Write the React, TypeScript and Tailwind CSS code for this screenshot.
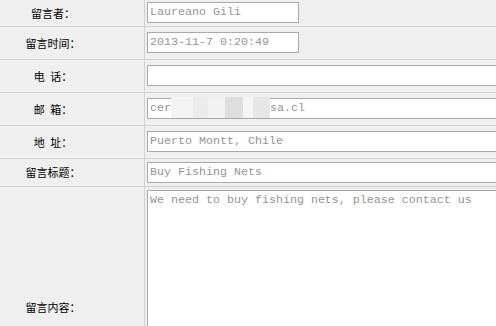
import React from 'react';

type Row = {
  label: string;
  value?: string;
  rowH: string;
  pad: string;
  boxW: string;
  blur?: boolean;
};

const ROWS: Row[] = [
  { label: '留言者：', value: 'Laureano Gili', rowH: 'h-[27px]', pad: 'pt-[2px]', boxW: 'w-[152px]' },
  { label: '留言时间：', value: '2013-11-7 0:20:49', rowH: 'h-[33px]', pad: 'pt-[5px]', boxW: 'w-[152px]' },
  { label: '电\u2002话：', value: '', rowH: 'h-[33px]', pad: 'pt-[5px]', boxW: 'w-[420px]' },
  { label: '邮\u2002箱：', value: 'cer', rowH: 'h-[33px]', pad: 'pt-[5px]', boxW: 'w-[420px]', blur: true },
  { label: '地\u2002址：', value: 'Puerto Montt, Chile', rowH: 'h-[33px]', pad: 'pt-[5px]', boxW: 'w-[420px]' },
  { label: '留言标题：', value: 'Buy Fishing Nets', rowH: 'h-[28px]', pad: 'pt-[3px]', boxW: 'w-[420px]' },
];

const labelFont = { fontFamily: '"Noto Sans CJK SC", "Noto Sans", sans-serif' };
const monoFont = { fontFamily: '"Liberation Mono", "DejaVu Sans Mono", monospace' };

function Field({ row }: { row: Row }) {
  return (
    <div
      className={`${row.boxW} h-[21px] shrink-0 bg-white border border-[#a9a9a9] px-[2px] text-[11.67px] leading-[19px] text-[#949494] whitespace-nowrap`}
      style={monoFont}
    >
      {row.value}
      {row.blur && (
        <>
          {/* blurred part of the address */}
          <span className="inline-flex h-[21px] align-top -mt-[2px]">
            <span className="w-[22px] bg-[#f3f3f3]" />
            <span className="w-[15px] bg-[#ebebeb]" />
            <span className="w-[17px] bg-[#f1f1f1]" />
            <span className="w-[18px] bg-[#dedede]" />
            <span className="w-[10px] bg-[#f4f4f4]" />
            <span className="w-[17px] bg-[#e6e6e6]" />
          </span>
          sa.cl
        </>
      )}
    </div>
  );
}

function Label({ text }: { text: string }) {
  return (
    <div className="w-[106px] text-center text-[11px] text-black whitespace-pre" style={labelFont}>
      {text}
    </div>
  );
}

export default function App() {
  return (
    <div className="w-[496px] h-[326px] overflow-hidden bg-[#efefef] text-black">
      {ROWS.map((row) => (
        <div key={row.label} className={`flex ${row.rowH} border-b border-[#d2d2d2]`}>
          <div className="w-[145px] shrink-0 border-r border-[#d2d2d2] flex items-center">
            <Label text={row.label} />
          </div>
          <div className={`flex-1 pl-[2px] ${row.pad} overflow-hidden`}>
            <Field row={row} />
          </div>
        </div>
      ))}
      <div className="flex h-[240px]">
        <div className="w-[145px] shrink-0 border-r border-[#d2d2d2] flex items-center">
          <Label text="留言内容：" />
        </div>
        <div className="flex-1 pl-[2px] pt-[3px] overflow-hidden">
          <div
            className="w-[420px] h-[234px] bg-white border border-[#a9a9a9] px-[2px] pt-[2px] text-[11.67px] leading-[14px] text-[#949494] whitespace-nowrap"
            style={monoFont}
          >
            We need to buy fishing nets, please contact us
          </div>
        </div>
      </div>
    </div>
  );
}
